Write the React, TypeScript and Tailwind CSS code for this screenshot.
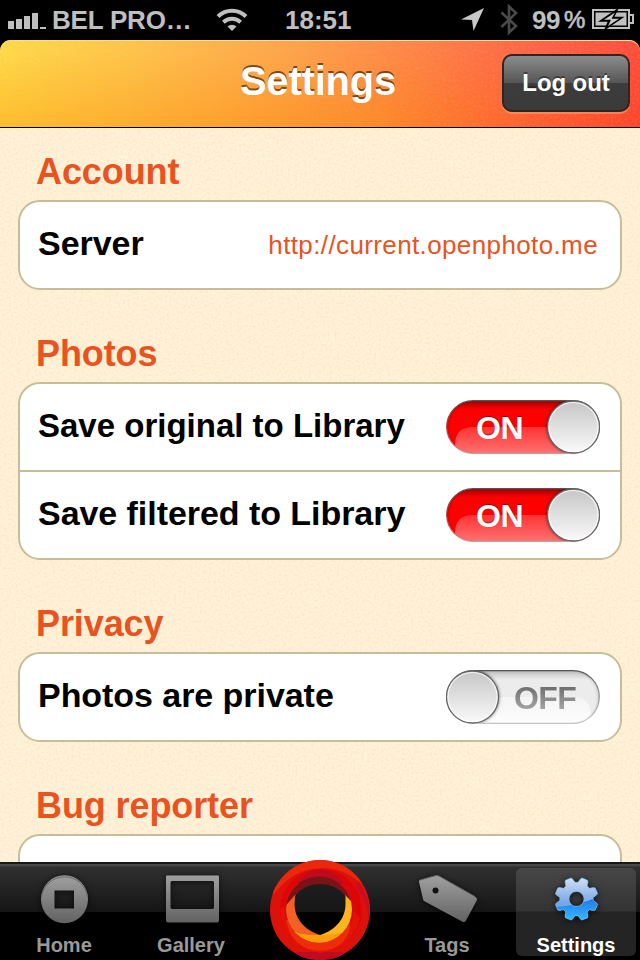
import type { ReactNode } from 'react'

function Grain({ id, alpha }: { id: string; alpha: number }) {
  return (
    <svg className="pointer-events-none absolute inset-0 h-full w-full">
      <filter id={id} x="0" y="0" width="100%" height="100%">
        <feTurbulence type="fractalNoise" baseFrequency="0.43" numOctaves="2" seed="11" />
        <feColorMatrix values={`0 0 0 0 0.72  0 0 0 0 0.48  0 0 0 0 0.16  ${alpha} 0 0 0 ${-alpha * 0.42}`} />
      </filter>
      <rect width="100%" height="100%" filter={`url(#${id})`} />
    </svg>
  )
}

function StatusBar() {
  return (
    <div className="flex h-10 items-center bg-black text-[26px] leading-10 font-bold text-[#bfbfbf]">
      <svg className="ml-2 h-10 w-[38px] shrink-0" viewBox="8 0 38 40" fill="#bfbfbf">
        <path d="M8 21h6v8H8zM16 19h6v10h-6zM24 16h6v13h-6zM32 13h6v16h-6zM40 27h6v2h-6z" />
      </svg>
      <span className="ml-[6px] w-[150px] whitespace-nowrap tracking-[-0.2px]">BEL PRO…</span>
      <svg className="ml-[14px] h-10 w-8 shrink-0" viewBox="216 0 32 40" fill="none" stroke="#bfbfbf" strokeWidth="4">
        <path d="M218 16.500a20 20 0 0 1 28 0" />
        <path d="M223.400 22.300a12.500 12.500 0 0 1 17.200 0" />
        <path d="M227.500 26.500a6.500 6.500 0 0 1 9 0L232 31z" fill="#bfbfbf" stroke="none" />
      </svg>
      <span className="ml-[37px] w-[68px] whitespace-nowrap">18:51</span>
      <svg className="ml-[107px] h-10 w-6 shrink-0" viewBox="460 0 24 40" fill="#c8c8c8">
        <path d="M484 8L473.500 31L472 20L461 19.500z" />
      </svg>
      <svg className="ml-4 h-10 w-5 shrink-0" viewBox="500 0 20 40" fill="none" stroke="#4a4a4a" strokeWidth="2.600">
        <path d="M501.500 12.500l14.500 13.500L509 32.500V6.500l7 6.500L501.500 27" />
      </svg>
      <span className="ml-3 tracking-[-0.5px]">99</span>
      <span className="ml-[4px] w-5 text-[24px] font-normal tracking-[-1px] [-webkit-text-stroke:0.7px_#bfbfbf]">%</span>
      <svg className="ml-[8px] h-10 w-11 shrink-0" viewBox="592 0 44 40">
        <path d="M593 10h36v18h-36z" fill="none" stroke="#bfbfbf" strokeWidth="2" />
        <path d="M630 15h3v8h-3" fill="none" stroke="#bfbfbf" strokeWidth="2" />
        <path d="M595.500 12.500h31v13h-31z" fill="#bfbfbf" />
        <path d="M616 11L602 20.500h7.500L606.500 27.500L620.500 18h-8z" fill="#000" stroke="#000" strokeWidth="2.500" />
        <path d="M615 12.500L604 19.800h7L608 26L619 18.700h-7.500z" fill="#c8c8c8" />
      </svg>
    </div>
  )
}

function Header() {
  return (
    <div className="bg-black">
      <header className="relative flex h-[88px] items-center justify-end overflow-hidden rounded-t-[11px] border-b border-black bg-[linear-gradient(101deg,#ffdb48_0%,#ffc24a_22%,#ffa44a_44%,#ff8246_64%,#ff5e46_84%,#ff4838_100%)] shadow-[inset_0_1px_0_#ffe08a]">
        <div className="absolute inset-0 bg-[linear-gradient(90deg,rgba(255,150,0,0.4)_0%,rgba(255,135,0,0.45)_60%,rgba(255,60,20,0.4)_100%)] [mask-image:linear-gradient(transparent_15%,black)]" />
        <Grain id="headGrain" alpha={0.5} />
        <h1 className="absolute inset-x-0 top-0 pr-1 text-center text-[40px] leading-[83px] font-bold tracking-[-0.2px] text-white [text-shadow:0_-2px_0_rgba(90,50,10,0.8)]">
          Settings
        </h1>
        <button className="relative mt-[-2px] mr-[10px] h-[58px] w-32 rounded-[10px] border-2 border-[#2c2624] bg-[linear-gradient(#8c8c8c_0%,#555_50%,#3c3c3c_51%,#3a3a3a_100%)] text-[24px] leading-[54px] font-bold tracking-[-0.1px] text-white shadow-[0_2px_0_rgba(255,160,110,0.6)] [text-shadow:0_-2px_0_rgba(0,0,0,0.4)]">
          Log out
        </button>
      </header>
    </div>
  )
}

function Switch({ on }: { on: boolean }) {
  const tone = on ? '#f00' : '#ececec'
  const id = on ? 'on' : 'off'
  const knob = on ? 127.500 : 26.500
  return (
    <div className="relative h-[54px] w-[154px] shrink-0">
      <svg className="absolute inset-0" width="154" height="54" viewBox="0 0 154 54">
        <defs>
          <linearGradient id={`${id}Edge`} x1="0" y1="0" x2="0" y2="1">
            <stop offset="0" stopColor="#555" />
            <stop offset="0.500" stopColor={on ? '#a33' : '#999'} />
            <stop offset="1" stopColor={on ? '#c99' : '#c4c4c4'} />
          </linearGradient>
          <linearGradient id={`${id}Shade`} x1="0" y1="0" x2="0" y2="1">
            <stop offset="0" stopColor="#000" stopOpacity={on ? 0.4 : 0.2} />
            <stop offset="0.180" stopColor="#000" stopOpacity="0" />
          </linearGradient>
          <linearGradient id={`${id}Gloss`} x1="0" y1="0" x2="0" y2="1">
            <stop offset="0" stopColor="#fff" stopOpacity={on ? 0.2 : 0.4} />
            <stop offset="1" stopColor="#fff" stopOpacity={on ? 0.45 : 0.95} />
          </linearGradient>
          <linearGradient id={`${id}Knob`} x1="0" y1="0" x2="0" y2="1">
            <stop offset="0" stopColor="#c8c8c8" />
            <stop offset="1" stopColor="#f8f8f8" />
          </linearGradient>
          <linearGradient id={`${id}Rim`} x1="0" y1="0" x2="0" y2="1">
            <stop offset="0" stopColor="#eee" />
            <stop offset="1" stopColor="#fff" />
          </linearGradient>
          <clipPath id={`${id}Clip`}>
            <rect x="1" y="1" width="152" height="52" rx="26" />
          </clipPath>
          <filter id={`${id}Blur`} x="-20%" y="-20%" width="140%" height="140%">
            <feGaussianBlur stdDeviation="1.6" />
          </filter>
        </defs>
        <rect x="0.800" y="0.800" width="152.400" height="52.400" rx="26.200" fill={tone} />
        <g clipPath={`url(#${id}Clip)`}>
          <rect width="154" height="54" fill={`url(#${id}Shade)`} />
          <path d={on ? 'M9 54V45Q9 27 27 27H154V54z' : 'M0 27H127Q145 27 145 45V54H0z'} fill={`url(#${id}Gloss)`} />
          <rect x="0" y="-1" width="154" height="58" rx="28" fill="none" stroke="#000" strokeOpacity={on ? 0.25 : 0.18} strokeWidth="4" filter={`url(#${id}Blur)`} />
          <circle cx={knob} cy="27" r="27" fill="#000" fillOpacity="0.5" filter={`url(#${id}Blur)`} />
        </g>
        <rect x="0.700" y="0.700" width="152.600" height="52.600" rx="26.300" fill="none" stroke={`url(#${id}Edge)`} strokeWidth="1.200" />
        <circle cx={knob} cy="27" r="26" fill={`url(#${id}Rim)`} stroke="#666" strokeWidth="1.300" />
        <circle cx={knob} cy="27" r="24" fill={`url(#${id}Knob)`} />
      </svg>
      {on ? (
        <span className="relative ml-[30px] block text-[32px] leading-[57px] font-bold tracking-[-0.5px] text-white [text-shadow:0_-1px_1px_rgba(80,0,0,0.6)]">ON</span>
      ) : (
        <span className="relative ml-[68px] block bg-[linear-gradient(#6f6f6f_30%,#a8a8a8_72%)] bg-clip-text text-[32px] leading-[57px] font-bold tracking-[-0.6px] text-transparent">OFF</span>
      )}
    </div>
  )
}

function Section({ title, first, children }: { title: string; first?: boolean; children?: ReactNode }) {
  return (
    <section className={first ? 'pt-6' : 'pt-11'}>
      <h2 className="h-12 pl-[18px] text-[36px] leading-10 font-bold tracking-[-0.1px] text-[#e9531f]">{title}</h2>
      <div className="min-h-[90px] divide-y-2 divide-[#c8bd99] rounded-[22px] border-2 border-[#c8bd99] bg-white">{children}</div>
    </section>
  )
}

function Row({ label, tight, children }: { label: string; tight?: boolean; children: ReactNode }) {
  return (
    <div className="box-content flex h-[86px] items-center justify-between pr-5 pl-[18px]">
      <span className={`font-bold whitespace-nowrap text-black ${tight ? 'pb-[3px] text-[33px]' : 'pb-[3px] text-[34px] tracking-[-0.05px]'}`}>{label}</span>
      {children}
    </div>
  )
}

function gearPath(cx: number, cy: number) {
  const points: string[] = []
  for (let i = 0; i < 8; i++) {
    const mid = (i * 45 + 22.5) * (Math.PI / 180)
    const spots: [number, number][] = [[-0.3, 16.8], [-0.2, 20.5], [-0.14, 21.8], [0.14, 21.8], [0.2, 20.5], [0.3, 16.8]]
    for (const [offset, radius] of spots) {
      points.push(`${(cx + radius * Math.cos(mid + offset)).toFixed(2)} ${(cy + radius * Math.sin(mid + offset)).toFixed(2)}`)
    }
  }
  return `M${points.join('L')}ZM${cx - 7.5} ${cy}a7.5 7.5 0 1 0 15 0a7.5 7.5 0 1 0 -15 0z`
}

function Tab({ label, active, children }: { label: string; active?: boolean; children: ReactNode }) {
  return (
    <div className={`flex h-[88px] w-[120px] flex-col items-center rounded-[6px] ${active ? 'bg-[linear-gradient(#474747_0%,#333_49%,#242424_50%,#242424_100%)]' : ''}`}>
      <svg className="h-[63px] w-[120px] shrink-0 drop-shadow-[0_1px_3px_rgba(0,0,0,0.7)]" viewBox="0 0 120 63">{children}</svg>
      <span className={`text-[20px] leading-7 font-bold ${active ? 'text-white' : 'text-[#999]'}`}>{label}</span>
    </div>
  )
}

function Logo() {
  return (
    <svg className="mt-[-10px] h-[100px] w-[100px] shrink-0" viewBox="0 0 100 100">
      <defs>
        <clipPath id="disc"><circle cx="50" cy="50" r="50" /></clipPath>
        <clipPath id="well"><circle cx="49" cy="49.500" r="33" /></clipPath>
        <linearGradient id="hole" x1="0" y1="0" x2="0" y2="1">
          <stop offset="0" stopColor="#1d1d1d" />
          <stop offset="0.540" stopColor="#171717" />
          <stop offset="0.550" stopColor="#000" />
        </linearGradient>
      </defs>
      <g clipPath="url(#disc)">
        <rect width="100" height="100" fill="#dc120a" />
        <path d="M0 30Q14 -4 50 0Q82 -4 92 24Q74 8 52 8Q24 8 4 34z" fill="#ec280c" />
        <path d="M26 92H74L66 104H34z" fill="#c00c22" />
        <path d="M88 22Q101 36 99 58Q96 40 86 26z" fill="#c80d22" />
        <circle cx="51" cy="50" r="41" fill="#dc0508" />
        <path d="M10 48Q12 86 50 93Q84 88 90 58L80 46H18z" fill="#e41108" />
        <circle cx="49" cy="51" r="35" fill="#e40b06" />
        <path d="M16 60Q22 90 50 91Q78 90 82 60z" fill="#ee2c0c" />
        <path d="M27 23Q36 10 50 10Q64 10 74 23L66 28H34z" fill="#bb0b20" />
        <path d="M74 22Q90 36 80 68L78 50z" fill="#d80812" />
      </g>
      <g clipPath="url(#well)">
        <rect width="100" height="100" fill="#781416" />
        <path d="M25 35L10 52V86H60V35z" fill="#f45f23" />
        <path d="M75 35L90 50V86H14L23 71Q34 77 50 75Q76 66 75 35z" fill="#fbb51d" />
        <path d="M14 68Q30 76 50 75Q62 76 76 71L62 84H36z" fill="#ff9c0b" />
      </g>
      <path d="M25 36Q34 24 50 24T75.500 36V44C75.500 58 66 70 50 75C34 70 24.500 58 24.500 44z" fill="url(#hole)" />
    </svg>
  )
}

function TabBar() {
  return (
    <nav className="relative flex h-[98px] shrink-0 items-start bg-[linear-gradient(#181818_0px,#181818_2px,#4b4b4b_2px,#454545_4px,#303030_5px,#151515_50px,#000_50px)] pt-[6px]">
      <svg width="0" height="0" className="absolute">
        <defs>
          <linearGradient id="metal" x1="0" y1="0" x2="0" y2="1">
            <stop offset="0" stopColor="#a0a0a0" />
            <stop offset="1" stopColor="#626262" />
          </linearGradient>
          <linearGradient id="gearTop" x1="0" y1="0" x2="0" y2="1">
            <stop offset="0" stopColor="#cfdff7" />
            <stop offset="0.600" stopColor="#78a5e8" />
          </linearGradient>
          <linearGradient id="gearLow" x1="0" y1="0" x2="0" y2="1">
            <stop offset="0.450" stopColor="#1a73e8" />
            <stop offset="1" stopColor="#35baff" />
          </linearGradient>
          <clipPath id="gearCut"><path d="M30 39Q62 40 90 25V63H30z" /></clipPath>
        </defs>
      </svg>
      <div className="ml-1 flex">
        <Tab label="Home">
          <path fillRule="evenodd" d="M37 31.200a23.500 24 0 1 0 47 0a23.500 24 0 1 0 -47 0zM50.500 22.500h19.500v18H50.500z" fill="url(#metal)" />
          <path d="M37.500 29a23.200 23.200 0 0 1 46 0" fill="none" stroke="#666" strokeWidth="1" />
        </Tab>
      </div>
      <div className="ml-[7px] flex">
        <Tab label="Gallery">
          <path fillRule="evenodd" d="M37 7h49q2 0 2 2v43.500q0 2-2 2H37q-2 0-2-2V9q0-2 2-2zM41 13q-1.500 0-1.500 1.500V39q0 2 1.500 2h40.500q1.500 0 1.500-2V14.500q0-1.500-1.500-1.500z" fill="url(#metal)" />
          <path d="M36 7.500h51" stroke="#666" />
        </Tab>
      </div>
      <div className="ml-[19px] flex pt-[2px]"><Logo /></div>
      <div className="ml-[17px] flex">
        <Tab label="Tags">
          <path fillRule="evenodd" d="M32 14Q31.500 12.500 33 12L49 7.500Q50.500 7 52 8L88 28.500Q90.500 30 90 32L79 52.500Q77.500 55 75 53.500L37 33Q36 32 36 31zM45.500 22.500a3 3 0 1 0 6 0a3 3 0 1 0 -6 0z" fill="url(#metal)" />
          <path d="M33 12L49 7.500L52 8L88 28.500" fill="none" stroke="#626262" />
        </Tab>
      </div>
      <div className="ml-[9px] flex">
        <Tab label="Settings" active>
          <path fillRule="evenodd" d={gearPath(60.5, 31)} fill="url(#gearTop)" />
          <path fillRule="evenodd" d={gearPath(60.5, 31)} fill="url(#gearLow)" clipPath="url(#gearCut)" />
          <path d={gearPath(60.5, 31)} fill="none" stroke="#79cdf2" strokeWidth="0.800" strokeOpacity="0.7" />
        </Tab>
      </div>
    </nav>
  )
}

export default function App() {
  return (
    <div className="flex h-[960px] w-[640px] flex-col overflow-hidden bg-black font-['Liberation_Sans',Arial,sans-serif]">
      <StatusBar />
      <Header />
      <main className="relative min-h-0 flex-1 overflow-hidden bg-[#fff2d9]">
        <Grain id="paperGrain" alpha={0.4} />
        <div className="relative px-[18px]">
          <Section title="Account" first>
            <Row label="Server">
              <span className="mr-[2px] text-[26px] tracking-[0.38px] text-[#e9531f]">http://current.openphoto.me</span>
            </Row>
          </Section>
          <Section title="Photos">
            <Row label="Save original to Library" tight><Switch on /></Row>
            <Row label="Save filtered to Library"><Switch on /></Row>
          </Section>
          <Section title="Privacy">
            <Row label="Photos are private"><Switch on={false} /></Row>
          </Section>
          <Section title="Bug reporter" />
        </div>
      </main>
      <TabBar />
    </div>
  )
}
